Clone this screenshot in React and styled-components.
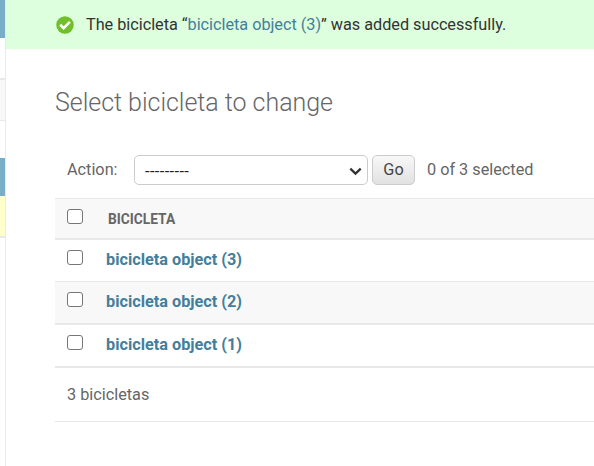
import React from "react";
import styled, { createGlobalStyle } from "styled-components";

const Global = createGlobalStyle`
  * { box-sizing: border-box; }
  body { margin: 0; background: #fff; color: #666; font: 16.25px/20px Roboto, sans-serif; overflow: hidden; }
`;

const Page = styled.div`
  display: flex;
  width: 594px;
  height: 466px;
`;

const Sidebar = styled.aside`
  width: 6px;
  flex: none;
  border-right: 1px solid #eaeaea;
`;

const SideBlock = styled.div`
  height: ${(p) => p.$h}px;
  background: ${(p) => p.$color || "#fff"};
  border-bottom: ${(p) => p.$line || 0}px solid #e8e8e8;
`;

const Main = styled.main`
  flex: 1;
  min-width: 0;
`;

const Message = styled.div`
  display: flex;
  align-items: center;
  height: 49px;
  padding-left: 50px;
  background: #ddffdd;
  color: #333;
  letter-spacing: -0.02px;
  white-space: nowrap;
`;

const CheckIcon = styled.svg`
  width: 18px;
  height: 18px;
  margin-right: 12px;
  flex: none;
`;

const Link = styled.a`
  color: #447e9b;
  font-weight: ${(p) => (p.$bold ? 700 : 400)};
`;

const Content = styled.section`
  padding: 39px 0 0 49px;
`;

const Title = styled.h1`
  margin: 0;
  height: 30px;
  font-size: 25px;
  line-height: 30px;
  font-weight: 300;
  letter-spacing: -0.03px;
  color: #666;
`;

const Actions = styled.div`
  display: flex;
  align-items: center;
  height: 80px;
  padding: 24px 0 0 12px;
`;

const ActionLabel = styled.label`
  width: 67px;
`;

const Select = styled.div`
  display: flex;
  align-items: center;
  justify-content: space-between;
  width: 234px;
  height: 30px;
  padding: 2px 5px 0 10px;
  border: 1px solid #ccc;
  border-radius: 5px;
  color: #222;
  background: #fff;
`;

const SelectValue = styled.span`
  padding-top: 2px;
  letter-spacing: 0.42px;
`;

const Chevron = styled.svg`
  width: 13px;
  height: 9px;
`;

const GoButton = styled.button`
  width: 43px;
  height: 30px;
  margin: 0 12px 0 4px;
  padding: 0;
  border: 1px solid #ccc;
  border-radius: 5px;
  background: linear-gradient(#f8f8f8, #e1e1e1);
  color: #444;
  font: inherit;
`;

const Row = styled.div`
  display: grid;
  grid-template-columns: 39px 1fr;
  height: ${(p) => p.$h}px;
  padding: 10px 0 0 12px;
  background: ${(p) => (p.$shade ? "#f8f8f8" : "#fff")};
  border-top: ${(p) => p.$top || 0}px solid #e8e8e8;
  border-bottom: ${(p) => p.$bottom}px solid #e8e8e8;
`;

const Checkbox = styled.input`
  appearance: none;
  width: 16px;
  height: 15px;
  margin: 0;
  border: 1px solid #767676;
  border-radius: 3px;
  background: #fff;
`;

const HeaderText = styled.span`
  padding: 1px 0 0 2px;
  font-size: 13.75px;
  line-height: 18px;
  font-weight: 700;
  text-transform: uppercase;
`;

const Footer = styled.div`
  height: 54px;
  padding: 17px 12px 0;
  border-bottom: 1px solid #e8e8e8;
`;

const rows = [
  { id: 3, h: 42, bottom: 1 },
  { id: 2, h: 43, bottom: 2, shade: true },
  { id: 1, h: 43, bottom: 2 },
];

export default function App() {
  return (
    <>
      <Global />
      <Page>
        <Sidebar>
          <SideBlock $h={38} $color="#79aec8" />
          <SideBlock $h={42} $line={2} />
          <SideBlock $h={41} $line={1} $color="#f8f8f8" />
          <SideBlock $h={37} />
          <SideBlock $h={38} $color="#79aec8" />
          <SideBlock $h={42} $line={2} $color="#ffffcc" />
        </Sidebar>
        <Main>
          <Message>
            <CheckIcon viewBox="0 0 18 18">
              <circle cx="9" cy="9" r="8.75" fill="#70bf2b" />
              <path d="M4.2 8.8l3.4 3.4 6.3-6.3" fill="none" stroke="#fff" strokeWidth="2.7" />
            </CheckIcon>
            <span>
              The bicicleta “<Link>bicicleta object (3)</Link>” was added successfully.
            </span>
          </Message>
          <Content>
            <Title>Select bicicleta to change</Title>
            <Actions>
              <ActionLabel>Action:</ActionLabel>
              <Select>
                <SelectValue>---------</SelectValue>
                <Chevron viewBox="0 0 13 9">
                  <path d="M1.3 1.6l5.2 5 5.2-5" fill="none" stroke="#333" strokeWidth="2.3" />
                </Chevron>
              </Select>
              <GoButton>Go</GoButton>
              <span>0 of 3 selected</span>
            </Actions>
            <Row $h={42} $top={1} $bottom={2} $shade>
              <Checkbox type="checkbox" />
              <HeaderText>Bicicleta</HeaderText>
            </Row>
            {rows.map((r) => (
              <Row key={r.id} $h={r.h} $bottom={r.bottom} $shade={r.shade}>
                <Checkbox type="checkbox" />
                <Link $bold>bicicleta object ({r.id})</Link>
              </Row>
            ))}
            <Footer>3 bicicletas</Footer>
          </Content>
        </Main>
      </Page>
    </>
  );
}
